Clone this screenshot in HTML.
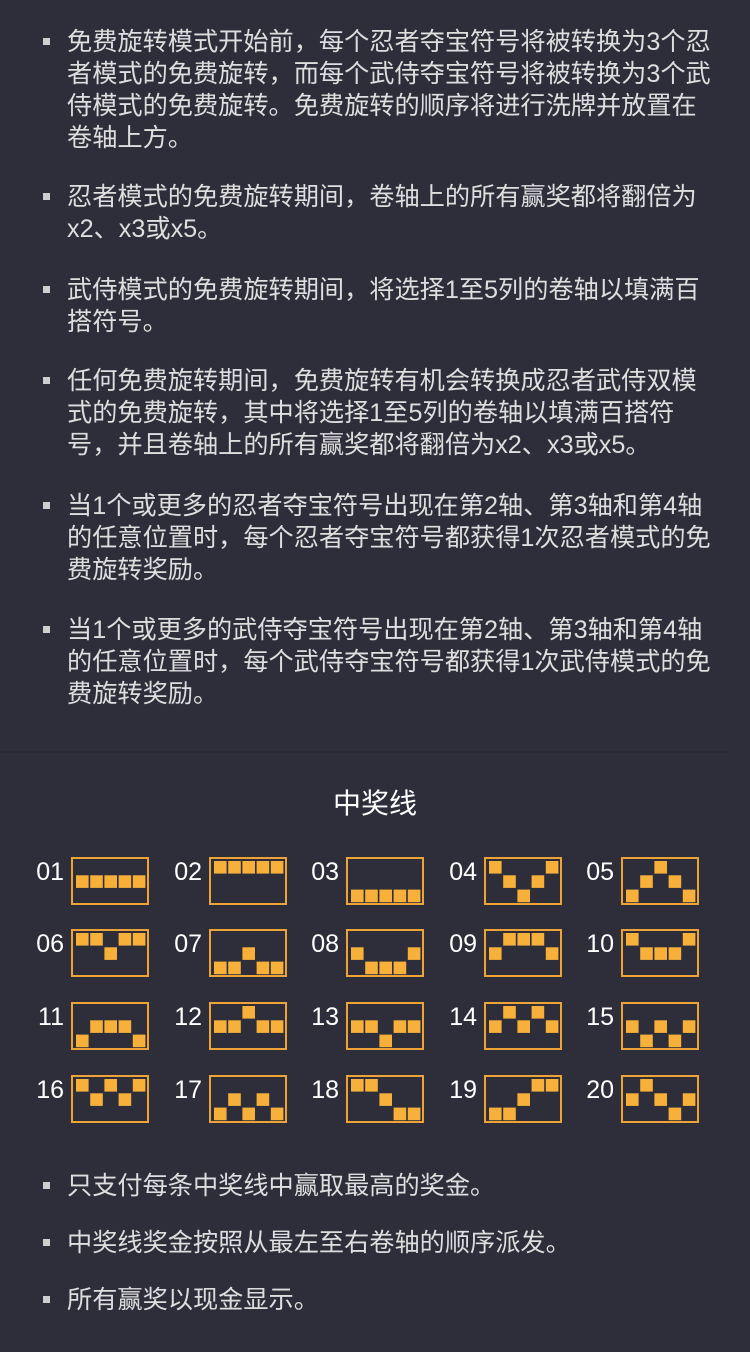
<!DOCTYPE html>
<html><head><meta charset="utf-8"><style>
html,body{margin:0;padding:0}
body{width:750px;height:1352px;background:#2e2e3a;position:relative;overflow:hidden;font-family:"Liberation Sans","Noto Sans CJK SC",sans-serif;color:#dedede}
.p{position:absolute;left:67px;font-size:25.2px;line-height:32px;white-space:nowrap}
.p:before{content:"";position:absolute;left:-24px;top:12px;width:7px;height:7px;background:#cfcfcf}
.div{position:absolute;left:0;top:751px;width:730px;height:2px;background:#2a2a35}
.t{position:absolute;top:782px;left:0;width:750px;text-align:center;font-size:28px;color:#fff}
.lab{position:absolute;font-size:25px;color:#fff;width:50px;text-align:right}
svg{position:absolute}
</style></head><body>
<div class="p" style="top:26px">免费旋转模式开始前，每个忍者夺宝符号将被转换为3个忍<br>者模式的免费旋转，而每个武侍夺宝符号将被转换为3个武<br>侍模式的免费旋转。免费旋转的顺序将进行洗牌并放置在<br>卷轴上方。</div>
<div class="p" style="top:181px">忍者模式的免费旋转期间，卷轴上的所有赢奖都将翻倍为<br>x2、x3或x5。</div>
<div class="p" style="top:274px">武侍模式的免费旋转期间，将选择1至5列的卷轴以填满百<br>搭符号。</div>
<div class="p" style="top:365px">任何免费旋转期间，免费旋转有机会转换成忍者武侍双模<br>式的免费旋转，其中将选择1至5列的卷轴以填满百搭符<br>号，并且卷轴上的所有赢奖都将翻倍为x2、x3或x5。</div>
<div class="p" style="top:490px">当1个或更多的忍者夺宝符号出现在第2轴、第3轴和第4轴<br>的任意位置时，每个忍者夺宝符号都获得1次忍者模式的免<br>费旋转奖励。</div>
<div class="p" style="top:614px">当1个或更多的武侍夺宝符号出现在第2轴、第3轴和第4轴<br>的任意位置时，每个武侍夺宝符号都获得1次武侍模式的免<br>费旋转奖励。</div>
<div class="div"></div>
<div class="t">中奖线</div>
<div id="g"></div>
<div class="p" style="top:1170px">只支付每条中奖线中赢取最高的奖金。</div>
<div class="p" style="top:1227px">中奖线奖金按照从最左至右卷轴的顺序派发。</div>
<div class="p" style="top:1284px">所有赢奖以现金显示。</div>
<script>
var P=["11111","00000","22222","01210","21012","00100","22122","12221","10001","01110","21112","11011","11211","10101","12121","01010","21212","00122","22100","10121"];
var xs=[71,209,346,484,621],ys=[857,929,1002,1075],h="";
for(var i=0;i<20;i++){var c=i%5,r=Math.floor(i/5),x=xs[c],y=ys[r];
var n=(i+1<10?"0":"")+(i+1);
h+='<div class="lab" style="left:'+(x-57)+'px;top:'+(y+1)+'px">'+n+'</div>';
var s='<svg style="left:'+x+'px;top:'+y+'px" width="78" height="48" viewBox="0 0 78 48"><rect x="1" y="1" width="76" height="46" fill="none" stroke="#eea336" stroke-width="2"/>';
for(var k=0;k<5;k++){var rr=+P[i][k];s+='<rect x="'+(5+k*14.2)+'" y="'+(4+rr*14.3)+'" width="12.6" height="12.6" fill="#f7b13b"/>';}
h+=s+'</svg>';}
document.getElementById("g").innerHTML=h;
</script>
</body></html>
